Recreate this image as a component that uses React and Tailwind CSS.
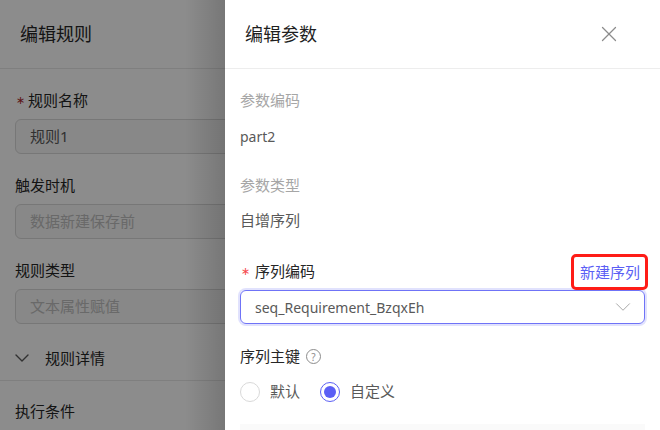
import React from "react";
import { ChevronDown, X } from "lucide-react";

const FONT = "font-['Noto_Sans','Noto_Sans_CJK_SC',sans-serif]";

const RuleField = ({ label, value, required, dark }) => (
  <div className="h-[85px]">
    <div className="h-[31px] mb-[3px] flex items-center text-[15px] leading-none text-[#262626]">
      {required && (
        <span className="w-[13px] pl-[1px] text-[11px] leading-none text-[#a8282c] font-['DejaVu_Sans']">∗</span>
      )}
      {label}
    </div>
    <div
      className={`h-[35px] w-[300px] flex items-center pl-[14px] border border-[#d9d9d9] rounded-[6px] bg-[#f7f7f7] text-[15px] ${
        dark ? "text-[#595959]" : "text-[#bfbfbf]"
      }`}>
      {value}
    </div>
  </div>
);

const Radio = ({ label, checked }) => (
  <div className="flex items-center gap-[10px]">
    {checked ? (
      <span className="w-5 h-5 rounded-full border border-[#5b5ff5] flex items-center justify-center">
        <span className="w-3 h-3 rounded-full bg-[#5b5ff5]" />
      </span>
    ) : (
      <span className="w-5 h-5 rounded-full border border-[#d9d9d9]" />
    )}
    <span className="text-[15px] text-[#595959]">{label}</span>
  </div>
);

const App = () => {
  return (
    <div className={`${FONT} w-[660px] h-[430px] flex overflow-hidden bg-white`}>
      {/* rule drawer behind the mask */}
      <div className="relative w-[225px] h-[430px] shrink-0 overflow-hidden">
        <div className="h-[69px] flex items-center pl-5 border-b border-[#e8e8e8] text-[18px] text-[#262626]">
          编辑规则
        </div>
        <div className="px-[15px] pt-4">
          <RuleField label="规则名称" value="规则1" required dark />
          <RuleField label="触发时机" value="数据新建保存前" />
          <RuleField label="规则类型" value="文本属性赋值" />
          <div className="h-[36px] flex items-center text-[15px] text-[#262626]">
            <ChevronDown size={24} strokeWidth={1.4} className="text-[#595959] -ml-[5px]" />
            <span className="ml-[11px]">规则详情</span>
          </div>
          <div className="h-[5px] -mx-[15px] border-b border-[#e8e8e8]" />
          <div className="h-[31px] mt-[15px] flex items-center text-[15px] text-[#262626]">
            执行条件
          </div>
        </div>
        <div className="absolute inset-0 bg-black/45" />
        <div className="absolute inset-y-0 right-0 w-[40px] bg-gradient-to-l from-black/15 to-transparent" />
      </div>

      {/* parameter drawer */}
      <div className="w-[435px] h-[430px] shrink-0 overflow-hidden bg-white">
        <div className="h-[69px] flex items-center justify-between pl-5 pr-[38px] border-b border-[#ededed]">
          <span className="text-[18px] text-[#1f1f1f]">编辑参数</span>
          <X size={26} strokeWidth={1.2} className="text-[#8c8c8c]" />
        </div>
        <div className="px-[15px]">
          <div className="h-[16px]" />
          <div className="h-[31px] flex items-center text-[15px] text-[#a6a6a6]">参数编码</div>
          <div className="h-[40px] flex items-center text-[14px] text-[#595959]">part2</div>
          <div className="h-[14px]" />
          <div className="h-[31px] flex items-center text-[15px] text-[#a6a6a6]">参数类型</div>
          <div className="h-[38px] flex items-center text-[15px] text-[#595959]">自增序列</div>
          <div className="h-[17px]" />
          <div className="h-[31px] flex items-center justify-between pr-[5px] text-[15px] text-[#262626]">
            <div className="flex items-center">
              <span className="w-[15px] pl-[1px] text-[11px] leading-none text-[#f5484d] font-['DejaVu_Sans']">∗</span>
              序列编码
            </div>
            <span className="relative block h-[22px] leading-[22px] text-[15px] text-[#5b5ff5]">
              新建序列
              <span className="absolute -left-[9px] -right-[8px] -top-[7px] -bottom-[7px] border-[3px] border-[#fe1c17] rounded-[5px]" />
            </span>
          </div>
          <div className="h-[34px] mt-[3px] flex items-center justify-between pl-[14px] pr-[8px] border border-[#6f73f7] rounded-[6px] shadow-[0_0_0_2px_rgba(91,95,245,0.18)] text-[14px] text-[#595959]">
            seq_Requirement_BzqxEh
            <ChevronDown size={26} strokeWidth={0.9} className="text-[#a6a6a6]" />
          </div>
          <div className="h-[17px]" />
          <div className="h-[31px] flex items-center gap-[6px] text-[15px] text-[#262626]">
            序列主键
            <span className="w-[15px] h-[15px] rounded-full border border-[#8c8c8c] flex items-center justify-center text-[10px] leading-none text-[#8c8c8c]">
              ?
            </span>
          </div>
          <div className="h-[2px]" />
          <div className="h-[35px] flex items-center gap-[20px]">
            <Radio label="默认" />
            <Radio label="自定义" checked />
          </div>
          <div className="h-[15px]" />
          <div className="h-[20px] bg-[#fafafa]" />
        </div>
      </div>
    </div>
  );
};

export default App;
